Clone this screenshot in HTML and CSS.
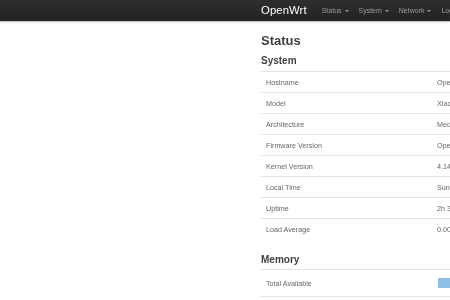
FILE: index.html
```html
<!DOCTYPE html>
<html lang="en">
<head>
    <meta charset="UTF-8">
    <meta name="viewport" content="width=device-width, initial-scale=1.0">
    <title>OpenWrt - Status</title>
    <link rel="stylesheet" href="styles.css">
</head>
<body>
    <div class="navbar">
        <div class="container nav-inner">
            <a class="brand" href="#">OpenWrt</a>
            <ul class="nav">
                <li><a href="#">Status <span class="caret"></span></a></li>
                <li><a href="#">System <span class="caret"></span></a></li>
                <li><a href="#">Network <span class="caret"></span></a></li>
                <li><a href="#">Logout</a></li>
            </ul>
        </div>
    </div>

    <div class="container main">
        <h2>Status</h2>

        <h3>System</h3>
        <table class="info">
            <tr><td class="label">Hostname</td><td>OpenWrt</td></tr>
            <tr><td class="label">Model</td><td>Xiaomi Mi Router 3G</td></tr>
            <tr><td class="label">Architecture</td><td>MediaTek MT7621 ver:1 eco:3</td></tr>
            <tr><td class="label">Firmware Version</td><td>OpenWrt 19.07.3 r11063-85e04e9f46</td></tr>
            <tr><td class="label">Kernel Version</td><td>4.14.180</td></tr>
            <tr><td class="label">Local Time</td><td>Sun Jun 14 12:00:00 2020</td></tr>
            <tr><td class="label">Uptime</td><td>2h 3m 12s</td></tr>
            <tr><td class="label">Load Average</td><td>0.00, 0.01, 0.00</td></tr>
        </table>

        <h3 class="section">Memory</h3>
        <table class="info">
            <tr class="bar-row">
                <td class="label">Total Available</td>
                <td><div class="progress"><div class="progress-bar" style="width: 82%;"></div></div></td>
            </tr>
        </table>
    </div>
</body>
</html>
```

FILE: styles.css
```css
body {
    margin: 0;
    padding: 0;
    background: #ffffff;
    font-family: "Liberation Sans", Arial, sans-serif;
    color: #404040;
    overflow: hidden;
}
.container {
    width: 700px;
    padding-left: 261px;
}
.navbar {
    height: 21px;
    background: linear-gradient(#2e2e2e, #232323);
    border-bottom: 1px solid #c8c8c8;
    box-shadow: 0 1px 2px rgba(0, 0, 0, 0.08);
}
.nav-inner {
    display: flex;
    align-items: center;
    height: 21px;
    will-change: transform;
}
.brand {
    font-size: 11.3px;
    line-height: 21px;
    color: #ffffff;
    text-decoration: none;
    margin-right: 10px;
    letter-spacing: 0.1px;
}
.nav {
    display: flex;
    list-style: none;
    margin: 0;
    padding: 0;
}
.nav li a {
    display: block;
    padding: 0 5px;
    font-size: 7px;
    line-height: 21px;
    color: #9a9a9a;
    text-decoration: none;
}
.caret {
    display: inline-block;
    width: 0;
    height: 0;
    margin-left: 1px;
    vertical-align: middle;
    border-top: 2px solid #9a9a9a;
    border-left: 2px solid transparent;
    border-right: 2px solid transparent;
}
.main {
    will-change: transform;
}
.main h2 {
    font-size: 13px;
    line-height: 15px;
    margin: 11px 0 0;
    color: #404040;
}
.main h3 {
    font-size: 10px;
    line-height: 12px;
    margin: 7px 0 4px;
    color: #404040;
}
.main h3.section {
    margin: 15px 0 3px;
}
.info {
    width: 450px;
    border-collapse: collapse;
}
.info td {
    height: 20px;
    padding: 0 5px;
    border-top: 1px solid #e4e4e4;
    font-size: 7.2px;
    color: #666666;
    vertical-align: middle;
    white-space: nowrap;
}
.info td.label {
    width: 161px;
}
.bar-row td {
    height: 10px;
    padding: 8px 5px;
    border-bottom: 1px solid #e4e4e4;
}
.bar-row td + td {
    padding-left: 6px;
}
.progress {
    width: 260px;
    height: 10px;
    background: #f2f2f2;
}
.progress-bar {
    height: 10px;
    background: #8fbfe6;
}
```
